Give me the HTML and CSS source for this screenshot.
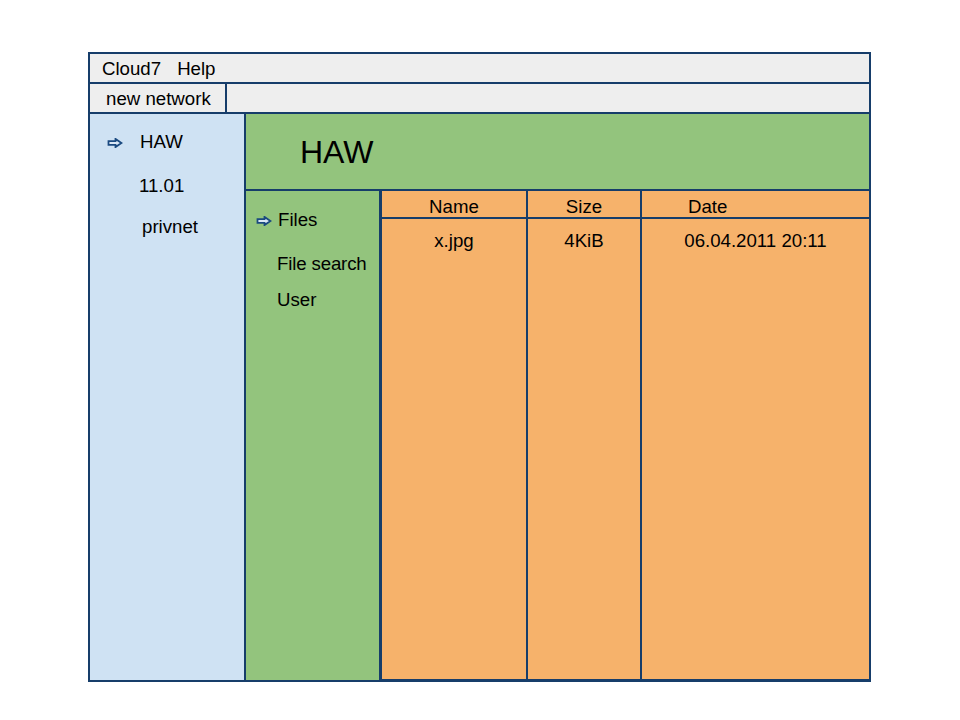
FILE: index.html
```html
<!DOCTYPE html>
<html>
<head>
<meta charset="utf-8">
<title>Cloud7</title>
<link rel="stylesheet" href="styles.css">
</head>
<body>
<div class="window">
  <div class="menubar"><span>Cloud7</span><span>Help</span></div>
  <div class="toolbar"><div class="tool-btn">new network</div></div>
  <div class="main">
    <aside class="networks">
      <div class="net active">
        <svg class="arrow" width="16" height="10" viewBox="0 0 16 10"><path d="M1.5 3.2 H8.5 V0.9 L14.5 5 L8.5 9.1 V6.8 H1.5 Z" fill="#dbe8f6" stroke="#1b4a80" stroke-width="1.8" stroke-linejoin="miter"/></svg>
        <span>HAW</span>
      </div>
      <div class="net n2">11.01</div>
      <div class="net n3">privnet</div>
    </aside>
    <section class="content">
      <header class="net-title">HAW</header>
      <div class="content-body">
        <nav class="tabs">
          <div class="tab active files-tab">
            <svg class="arrow" width="16" height="10" viewBox="0 0 16 10"><path d="M1.5 3.2 H8.5 V0.9 L14.5 5 L8.5 9.1 V6.8 H1.5 Z" fill="#dbe8f6" stroke="#1b4a80" stroke-width="1.8" stroke-linejoin="miter"/></svg>
            <span>Files</span>
          </div>
          <div class="tab search-tab">File search</div>
          <div class="tab">User</div>
        </nav>
        <div class="filelist">
          <div class="th">Name</div>
          <div class="th">Size</div>
          <div class="th date-head">Date</div>
          <div class="td">x.jpg</div>
          <div class="td">4KiB</div>
          <div class="td last">06.04.2011 20:11</div>
        </div>
      </div>
    </section>
  </div>
</div>
</body>
</html>
```

FILE: styles.css
```css
* { box-sizing: border-box; }
html, body { margin: 0; padding: 0; background: #ffffff; }
body {
  font-family: "Liberation Sans", Arial, sans-serif;
  font-size: 18.67px;
  color: #000;
}
.window {
  margin: 52px 0 0 88px;
  width: 783px;
  height: 630px;
  border: 2px solid #163d6a;
  display: flex;
  flex-direction: column;
}
.menubar {
  height: 30px;
  background: #eeeeee;
  border-bottom: 2px solid #163d6a;
  display: flex;
  align-items: center;
  gap: 16px;
  padding-left: 12px;
  padding-top: 1px;
  line-height: 22px;
}
.toolbar {
  height: 30px;
  background: #eeeeee;
  border-bottom: 2px solid #163d6a;
  display: flex;
}
.tool-btn {
  width: 137px;
  border-right: 2px solid #163d6a;
  padding-left: 16px;
  padding-top: 1px;
  display: flex;
  align-items: center;
  line-height: 22px;
}
.main {
  flex: 1;
  display: flex;
  min-height: 0;
}
.networks {
  width: 156px;
  background: #cfe2f3;
  border-right: 2px solid #163d6a;
  padding-top: 17px;
  display: flex;
  flex-direction: column;
}
.net {
  line-height: 22px;
  padding-left: 49px;
}
.net.active {
  display: flex;
  align-items: center;
  padding-left: 17px;
  gap: 17px;
}
.net.active .arrow { margin-top: 2px; }
.net.n2 { margin-top: 22px; }
.net.n3 { margin-top: 19px; padding-left: 52px; }
.content {
  flex: 1;
  display: flex;
  flex-direction: column;
}
.net-title {
  height: 77px;
  background: #93c47d;
  border-bottom: 2px solid #163d6a;
  display: flex;
  align-items: center;
  padding-left: 54px;
  font-size: 32px;
  padding-top: 1px;
}
.content-body {
  flex: 1;
  display: flex;
}
.tabs {
  width: 135px;
  background: #93c47d;
  border-right: 2px solid #163d6a;
  padding-top: 18px;
  display: flex;
  flex-direction: column;
}
.tab {
  line-height: 22px;
  padding-left: 31px;
}
.tab.active {
  display: flex;
  align-items: center;
  padding-left: 10px;
  gap: 6px;
}
.tab.active .arrow { margin-top: 1px; }
.files-tab { margin-bottom: 22px; }
.search-tab { margin-bottom: 14px; letter-spacing: -0.15px; }
.filelist {
  flex: 1;
  background: #f6b26b;
  display: grid;
  grid-template-columns: 146px 114px 1fr;
  grid-template-rows: 28px 1fr;
  border-left: 1px solid #163d6a;
  border-right: 2px solid #163d6a;
  border-bottom: 2px solid #163d6a;
  margin-right: -2px;
  margin-bottom: -1px;
}
.th, .td {
  border-right: 2px solid #163d6a;
  line-height: 22px;
  text-align: center;
}
.th {
  border-bottom: 2px solid #163d6a;
  padding-top: 5px;
}
.td { padding-top: 11px; }
.date-head { text-align: left; padding-left: 46px; border-right: none; }
.td.last { border-right: none; }
```
